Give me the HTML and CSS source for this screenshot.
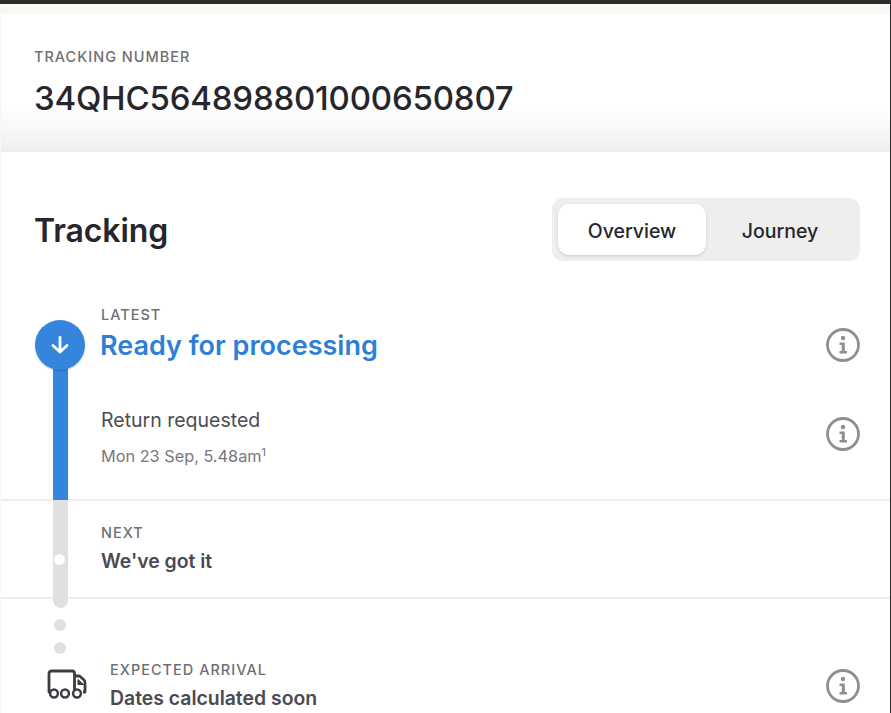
FILE: index.html
```html
<!DOCTYPE html>
<html lang="en">
<head>
    <meta charset="UTF-8">
    <meta name="viewport" content="width=device-width, initial-scale=1.0">
    <title>Tracking</title>
    <link rel="stylesheet" href="styles.css">
</head>
<body>
    <div class="card">
        <header class="head">
            <div class="label">Tracking number</div>
            <div class="number">34QHC564898801000650807</div>
        </header>
        <div class="title-row">
            <h1>Tracking</h1>
            <div class="tabs">
                <span class="tab active">Overview</span>
                <span class="tab">Journey</span>
            </div>
        </div>
        <div class="timeline">
            <!-- rail sits over the rows -->
            <div class="rail-blue"></div>
            <div class="rail-grey"><i></i></div>
            <div class="bubble">
                <svg width="20" height="20" viewBox="0 0 20 20" fill="none" stroke="#fff" stroke-width="2.8" stroke-linecap="round" stroke-linejoin="round"><path d="M10 2.500V17M3 10.500 10 17l7-6.500"/></svg>
            </div>
            <section class="row latest">
                <div class="row-top">
                    <div>
                        <div class="label">Latest</div>
                        <div class="status">Ready for processing</div>
                    </div>
                    <svg class="info" viewBox="0 0 34 34"><use href="#i"/></svg>
                </div>
                <div class="row-top second">
                    <div>
                        <div class="event">Return requested</div>
                        <div class="when">Mon 23 Sep, 5.48am<sup>1</sup></div>
                    </div>
                    <svg class="info" viewBox="0 0 34 34"><use href="#i"/></svg>
                </div>
            </section>
            <section class="row next">
                <div class="label">Next</div>
                <div class="strong">We've got it</div>
            </section>
            <section class="arrival">
                <div class="dots"><i></i><i></i></div>
                <div class="arrival-row">
                    <svg class="truck" width="40" height="30" viewBox="0 0 40 30" fill="none" stroke="#3c3c44" stroke-width="2.800" stroke-linejoin="round">
                        <path d="M3.500 23H2V4.500Q2 2 4.500 2H25q2.500 0 2.500 2.500V23M27.500 7h5l4 3.500q1.500 1.300 1.500 3V23h-2"/>
                        <path d="M31 10.500v5h5.500z" fill="#3c3c44" stroke-width="1"/>
                        <circle cx="7" cy="24.500" r="3.900" fill="#fff" stroke-width="2.500"/><circle cx="18" cy="24.500" r="3.900" fill="#fff" stroke-width="2.500"/><circle cx="30" cy="24.500" r="3.900" fill="#fff" stroke-width="2.500"/>
                    </svg>
                    <div class="arrival-text">
                        <div class="label">Expected arrival</div>
                        <div class="strong">Dates calculated soon</div>
                    </div>
                    <svg class="info" viewBox="0 0 34 34"><use href="#i"/></svg>
                </div>
            </section>
        </div>
    </div>

    <svg width="0" height="0" class="defs">
        <symbol id="i" viewBox="0 0 34 34">
            <circle cx="17" cy="17" r="15.500" fill="none" stroke="#8f8f8f" stroke-width="2.800"/>
            <circle cx="17" cy="10" r="2.200" fill="#8f8f8f"/>
            <path d="M13.500 14.500h5.300V23h2.200v2.500h-7.500V23h2.200v-6h-2.200z" fill="#8f8f8f"/>
        </symbol>
    </svg>
</body>
</html>
```

FILE: styles.css
```css
*{
    margin: 0;padding: 0;box-sizing: border-box;
}
html,body{
    height: 100%;
    overflow: hidden;
}
body{
    background-color: #f7f8f3;
    border-top: 4px solid #2b2b2b;
    border-right: 1px solid #2b2b2b;
    padding: 10px 0 0 1px;
    font-family: Inter, "Liberation Sans", sans-serif;
    color: #26262c;
}
.defs{
    position: absolute;
}
.card{
    height: 100%;
    background-color: white;
    border-radius: 8px 0 0 0;
}
.label{
    font-size: 14.5px;
    font-weight: 500;
    line-height: 16px;
    letter-spacing: 1px;
    text-transform: uppercase;
    color: #6f6f75;
}
.head{
    height: 138px;
    padding: 35px 0 0 33px;
    background: linear-gradient(#fff 65%, #f7f7f7 85%, #eeeeee);
}
.number{
    font-size: 33px;
    font-weight: 500;
    letter-spacing: -.2px;
    line-height: 44px;
    margin-top: 11px;
}
.title-row{
    display: flex;
    align-items: center;
    justify-content: space-between;
    padding: 46px 30px 0 33px;
}
h1{
    font-size: 32px;
    font-weight: 600;
    letter-spacing: -.1px;
    line-height: 40px;
    margin-top: 2px;
}
.tabs{
    display: flex;
    width: 308px;
    height: 63px;
    padding: 6px;
    background-color: #eeeeee;
    border-radius: 11px;
}
.tab{
    flex: 1;
    border-radius: 11px;
    text-align: center;
    line-height: 54px;
    font-size: 19.5px;
    font-weight: 500;
}
.tab.active{
    background-color: white;
    box-shadow: 0 1px 3px rgba(0, 0, 0, 0.15);
}
.timeline{
    position: relative;
}
.rail-blue{
    position: absolute;
    left: 52px;
    top: 84px;
    width: 15px;
    height: 155px;
    background-color: #3585dc;
}
.rail-grey{
    position: absolute;
    left: 52px;
    top: 239px;
    width: 15px;
    height: 108px;
    background-color: #e0e0e0;
    border-radius: 0 0 8px 8px;
}
.rail-grey>i{
    position: absolute;
    left: 1px;
    top: 54px;
    width: 11px;
    height: 11px;
    border-radius: 50%;
    background-color: white;
}
.bubble{
    position: absolute;
    left: 34px;
    top: 59px;
    width: 50px;
    height: 50px;
    border-radius: 50%;
    background-color: #3585dc;
    box-shadow: 0 1px 2px rgba(0, 0, 0, 0.2);
    display: flex;
    align-items: center;
    justify-content: center;
}
.row{
    padding-left: 100px;
}
.latest{
    height: 240px;
    padding-top: 46px;
    border-bottom: 2px solid #eeeeee;
}
.row-top{
    display: flex;
    align-items: flex-start;
    justify-content: space-between;
    padding-right: 30px;
}
.info{
    width: 34px;
    height: 34px;
    flex: none;
}
.latest .info{
    margin-top: 21px;
}
.status{
    font-size: 27px;
    font-weight: 600;
    line-height: 34px;
    margin: 6px 0 0 -1px;
    color: #2e7fd6;
}
.second{
    margin-top: 43px;
}
.second .info{
    margin-top: 11px;
}
.event{
    font-size: 19.5px;
    line-height: 28px;
    color: #4c4c52;
}
.when{
    font-size: 16.3px;
    line-height: 24px;
    margin-top: 10px;
    color: #77777c;
}
.when sup{
    font-size: 11px;
    line-height: 0;
}
.next{
    height: 98px;
    padding-top: 24px;
    border-bottom: 2px solid #eeeeee;
}
.strong{
    font-size: 19.4px;
    font-weight: 600;
    color: #4a4a50;
    line-height: 24px;
    margin-top: 8px;
}
.dots{
    display: flex;
    flex-direction: column;
    gap: 11px;
    padding: 20px 0 0 53px;
}
.dots>i{
    width: 12px;
    height: 12px;
    border-radius: 50%;
    background-color: #e0e0e0;
}
.arrival-row{
    display: flex;
    align-items: flex-start;
    padding: 8px 30px 0 46px;
}
.truck{
    flex: none;
    margin-top: 7px;
}
.arrival-text{
    flex: 1;
    margin-left: 23px;
}
.arrival .info{
    margin-top: 7px;
}
```
